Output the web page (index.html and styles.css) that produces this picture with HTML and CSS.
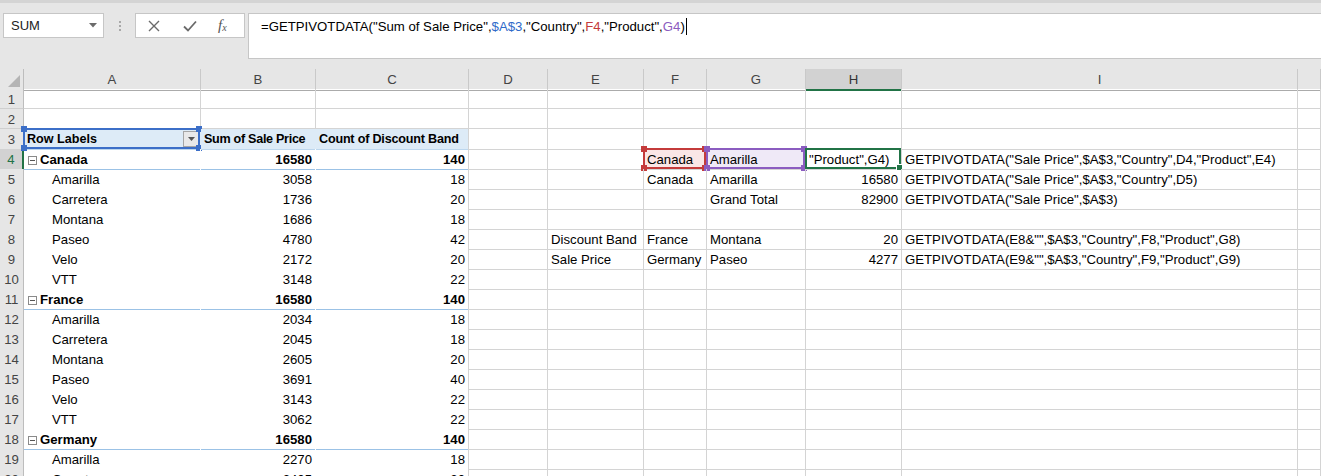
FILE: index.html
```html
<!DOCTYPE html>
<html>
<head>
<meta charset="utf-8">
<link rel="stylesheet" href="styles.css">
</head>
<body>
<div class="app">
  <div class="topstrip"></div>
  <div class="fbar">
    <div class="namebox"><span>SUM</span><svg class="nb-caret" width="8" height="5" viewBox="0 0 8 5"><path d="M0 0H8L4 4.5Z" fill="#6b6b6b"/></svg></div>
    <div class="grip"><i></i><i></i><i></i></div>
    <div class="btns">
      <svg class="ico" width="12" height="12" viewBox="0 0 12 12"><path d="M1 1L11 11M11 1L1 11" stroke="#6a6a6a" stroke-width="1.4" fill="none"/></svg>
      <svg class="ico" width="14" height="12" viewBox="0 0 14 12"><path d="M1 6.5L5 10.5L13 1.5" stroke="#6a6a6a" stroke-width="1.8" fill="none"/></svg>
      <span class="fx">f<sub>x</sub></span>
    </div>
    <div class="formula">=GETPIVOTDATA("Sum of Sale Price",<span class="r-blue">$A$3</span>,"Country",<span class="r-red">F4</span>,"Product",<span class="r-purple">G4</span>)<span class="caret"></span></div>
  </div>

  <div class="sheet">
    <div class="row colhdr">
      <div class="corner"><svg width="12" height="12" viewBox="0 0 12 12"><path d="M12 0V12H0Z" fill="#b4b4b4"/></svg></div>
      <div class="ch">A</div><div class="ch">B</div><div class="ch">C</div><div class="ch">D</div><div class="ch">E</div><div class="ch">F</div><div class="ch">G</div><div class="ch sel">H</div><div class="ch">I</div><div class="ch last"></div>
    </div>

    <div class="row"><div class="rh">1</div><div class="c"></div><div class="c"></div><div class="c"></div><div class="c"></div><div class="c"></div><div class="c"></div><div class="c"></div><div class="c"></div><div class="c"></div><div class="c"></div></div>
    <div class="row"><div class="rh">2</div><div class="c"></div><div class="c"></div><div class="c"></div><div class="c"></div><div class="c"></div><div class="c"></div><div class="c"></div><div class="c"></div><div class="c"></div><div class="c"></div></div>
    <div class="row"><div class="rh">3</div>
      <div class="c ph pa3"><span>Row Labels</span><span class="dd"><svg width="7" height="4" viewBox="0 0 7 4"><path d="M0 0H7L3.5 4Z" fill="#555"/></svg></span><span class="hl hl-blue"><i class="h tl"></i><i class="h tr"></i><i class="h bl"></i><i class="h br"></i></span></div>
      <div class="c ph pm">Sum of Sale Price</div><div class="c ph pc">Count of Discount Band</div>
      <div class="c"></div><div class="c"></div><div class="c"></div><div class="c"></div><div class="c"></div><div class="c"></div><div class="c"></div></div>
    <div class="row"><div class="rh rsel">4</div>
      <div class="c pa g b"><span class="tog"></span>Canada</div><div class="c pm g b n">16580</div><div class="c pc g b n">140</div>
      <div class="c"></div><div class="c"></div>
      <div class="c fill-red">Canada<span class="hl hl-red"><i class="h tl"></i><i class="h tr"></i><i class="h bl"></i><i class="h br"></i></span></div>
      <div class="c fill-purple">Amarilla<span class="hl hl-purple"><i class="h tl"></i><i class="h tr"></i><i class="h bl"></i><i class="h br"></i></span></div>
      <div class="c">"Product",G4)<span class="hl hl-green"><i class="h br"></i></span></div>
      <div class="c">GETPIVOTDATA("Sale Price",$A$3,"Country",D4,"Product",E4)</div><div class="c"></div></div>
    <div class="row"><div class="rh">5</div>
      <div class="c pa in">Amarilla</div><div class="c pm n">3058</div><div class="c pc n">18</div>
      <div class="c"></div><div class="c"></div><div class="c">Canada</div><div class="c">Amarilla</div><div class="c n">16580</div><div class="c">GETPIVOTDATA("Sale Price",$A$3,"Country",D5)</div><div class="c"></div></div>
    <div class="row"><div class="rh">6</div>
      <div class="c pa in">Carretera</div><div class="c pm n">1736</div><div class="c pc n">20</div>
      <div class="c"></div><div class="c"></div><div class="c"></div><div class="c">Grand Total</div><div class="c n">82900</div><div class="c">GETPIVOTDATA("Sale Price",$A$3)</div><div class="c"></div></div>
    <div class="row"><div class="rh">7</div>
      <div class="c pa in">Montana</div><div class="c pm n">1686</div><div class="c pc n">18</div>
      <div class="c"></div><div class="c"></div><div class="c"></div><div class="c"></div><div class="c"></div><div class="c"></div><div class="c"></div></div>
    <div class="row"><div class="rh">8</div>
      <div class="c pa in">Paseo</div><div class="c pm n">4780</div><div class="c pc n">42</div>
      <div class="c"></div><div class="c">Discount Band</div><div class="c">France</div><div class="c">Montana</div><div class="c n">20</div><div class="c">GETPIVOTDATA(E8&amp;"",$A$3,"Country",F8,"Product",G8)</div><div class="c"></div></div>
    <div class="row"><div class="rh">9</div>
      <div class="c pa in">Velo</div><div class="c pm n">2172</div><div class="c pc n">20</div>
      <div class="c"></div><div class="c">Sale Price</div><div class="c">Germany</div><div class="c">Paseo</div><div class="c n">4277</div><div class="c">GETPIVOTDATA(E9&amp;"",$A$3,"Country",F9,"Product",G9)</div><div class="c"></div></div>
    <div class="row"><div class="rh">10</div>
      <div class="c pa in">VTT</div><div class="c pm n">3148</div><div class="c pc n">22</div>
      <div class="c"></div><div class="c"></div><div class="c"></div><div class="c"></div><div class="c"></div><div class="c"></div><div class="c"></div></div>
    <div class="row"><div class="rh">11</div>
      <div class="c pa g b"><span class="tog"></span>France</div><div class="c pm g b n">16580</div><div class="c pc g b n">140</div>
      <div class="c"></div><div class="c"></div><div class="c"></div><div class="c"></div><div class="c"></div><div class="c"></div><div class="c"></div></div>
    <div class="row"><div class="rh">12</div>
      <div class="c pa in">Amarilla</div><div class="c pm n">2034</div><div class="c pc n">18</div>
      <div class="c"></div><div class="c"></div><div class="c"></div><div class="c"></div><div class="c"></div><div class="c"></div><div class="c"></div></div>
    <div class="row"><div class="rh">13</div>
      <div class="c pa in">Carretera</div><div class="c pm n">2045</div><div class="c pc n">18</div>
      <div class="c"></div><div class="c"></div><div class="c"></div><div class="c"></div><div class="c"></div><div class="c"></div><div class="c"></div></div>
    <div class="row"><div class="rh">14</div>
      <div class="c pa in">Montana</div><div class="c pm n">2605</div><div class="c pc n">20</div>
      <div class="c"></div><div class="c"></div><div class="c"></div><div class="c"></div><div class="c"></div><div class="c"></div><div class="c"></div></div>
    <div class="row"><div class="rh">15</div>
      <div class="c pa in">Paseo</div><div class="c pm n">3691</div><div class="c pc n">40</div>
      <div class="c"></div><div class="c"></div><div class="c"></div><div class="c"></div><div class="c"></div><div class="c"></div><div class="c"></div></div>
    <div class="row"><div class="rh">16</div>
      <div class="c pa in">Velo</div><div class="c pm n">3143</div><div class="c pc n">22</div>
      <div class="c"></div><div class="c"></div><div class="c"></div><div class="c"></div><div class="c"></div><div class="c"></div><div class="c"></div></div>
    <div class="row"><div class="rh">17</div>
      <div class="c pa in">VTT</div><div class="c pm n">3062</div><div class="c pc n">22</div>
      <div class="c"></div><div class="c"></div><div class="c"></div><div class="c"></div><div class="c"></div><div class="c"></div><div class="c"></div></div>
    <div class="row"><div class="rh">18</div>
      <div class="c pa g b"><span class="tog"></span>Germany</div><div class="c pm g b n">16580</div><div class="c pc g b n">140</div>
      <div class="c"></div><div class="c"></div><div class="c"></div><div class="c"></div><div class="c"></div><div class="c"></div><div class="c"></div></div>
    <div class="row"><div class="rh">19</div>
      <div class="c pa in">Amarilla</div><div class="c pm n">2270</div><div class="c pc n">18</div>
      <div class="c"></div><div class="c"></div><div class="c"></div><div class="c"></div><div class="c"></div><div class="c"></div><div class="c"></div></div>
    <div class="row"><div class="rh">20</div>
      <div class="c pa in">Carretera</div><div class="c pm n">2405</div><div class="c pc n">20</div>
      <div class="c"></div><div class="c"></div><div class="c"></div><div class="c"></div><div class="c"></div><div class="c"></div><div class="c"></div></div>
  </div>
</div>
</body>
</html>
```

FILE: styles.css
```css
html, body {
  margin: 0;
  padding: 0;
  overflow: hidden;
  background: #ffffff;
}
body {
  font-family: "Liberation Sans", Arial, sans-serif;
  font-size: 13.2px;
  color: #000;
}
.app {
  width: 1321px;
  height: 476px;
  overflow: hidden;
}
.topstrip {
  height: 3px;
  background: #d4d4d4;
}
.fbar {
  height: 66px;
  box-sizing: border-box;
  background: #e6e6e6;
  padding: 10px 0 0 3px;
  display: flex;
  align-items: flex-start;
}
.namebox {
  width: 101px;
  height: 25px;
  box-sizing: border-box;
  background: #fff;
  border: 1px solid #c6c6c6;
  display: flex;
  align-items: center;
  justify-content: space-between;
  padding: 0 6px 0 7px;
  color: #222;
  font-size: 13px;
}
.grip {
  width: 31px;
  height: 25px;
  display: flex;
  flex-direction: column;
  align-items: center;
  justify-content: center;
  gap: 2px;
}
.grip i {
  display: block;
  width: 2px;
  height: 2px;
  background: #a8a8a8;
}
.btns {
  width: 110px;
  height: 25px;
  box-sizing: border-box;
  background: #fff;
  border: 1px solid #c6c6c6;
  display: flex;
  align-items: center;
  padding-left: 12px;
}
.btns .ico:first-child { margin-right: 23px; }
.btns .ico:nth-child(2) { margin-right: 21px; }
.fx {
  font-family: "Liberation Serif", "Times New Roman", serif;
  font-style: italic;
  font-size: 15px;
  color: #555;
  line-height: 1;
}
.fx sub {
  font-size: 10px;
  vertical-align: -1px;
}
.formula {
  margin-left: 3px;
  flex: 1;
  height: 46px;
  box-sizing: border-box;
  background: #fff;
  border: 1px solid #c6c6c6;
  border-right: none;
  padding: 4px 0 0 12px;
  line-height: 18px;
  color: #000;
  white-space: nowrap;
}
.r-blue { color: #2f6ac9; }
.r-red { color: #c43b3b; }
.r-purple { color: #8b5cc0; }
.caret {
  display: inline-block;
  width: 1px;
  height: 17px;
  background: #000;
  vertical-align: -4px;
  margin-left: 1px;
}

/* sheet */
.row {
  display: grid;
  grid-template-columns: 24px 177px 115px 153px 79px 96px 63px 99px 96px 396px 1fr;
  height: 20px;
}
.colhdr {
  background: #e6e6e6;
}
.corner {
  box-sizing: border-box;
  border-right: 1px solid #bdbdbd;
  border-bottom: 1px solid #ababab;
  display: flex;
  align-items: flex-end;
  justify-content: flex-end;
  padding: 0 3px 3px 0;
}
.ch {
  box-sizing: border-box;
  border-right: 1px solid #c9c9c9;
  border-bottom: 1px solid #ababab;
  text-align: center;
  line-height: 19px;
  padding-top: 1px;
  color: #444;
}
.ch.sel {
  background: #d2d2d2;
  border-bottom: 2px solid #217346;
  color: #333;
}
.rh {
  box-sizing: border-box;
  background: #e6e6e6;
  border-right: 1px solid #bdbdbd;
  border-bottom: 1px solid #cfcfcf;
  text-align: center;
  line-height: 19px;
  padding-top: 1px;
  color: #444;
  overflow: hidden;
}
.rh.rsel {
  background: #d2d2d2;
  border-right: 2px solid #217346;
  color: #217346;
}
.c {
  position: relative;
  box-sizing: border-box;
  border-right: 1px solid #d4d4d4;
  border-bottom: 1px solid #d4d4d4;
  padding: 1px 3px 0;
  line-height: 19px;
  white-space: nowrap;
}
.n { text-align: right; }
.b { font-weight: bold; }

/* pivot */
.pa, .pm { border-right-color: #fff; border-bottom-color: #fff; }
.pc { border-bottom-color: #fff; }
.ph {
  background: #ddebf7;
  font-weight: bold;
  font-size: 12.6px;
  border-bottom-color: #bdd7ee;
}
.ph.pa3 {
  display: flex;
  align-items: center;
  justify-content: space-between;
  padding: 0 1px 0 3px;
  border-right-color: #ddebf7;
}
.ph.pm { border-right-color: #ddebf7; letter-spacing: -0.3px; }
.ph.pc { letter-spacing: -0.2px; }
.pa.g, .pm.g, .pc.g { border-bottom-color: #9bc2e6; }
.in { padding-left: 28px; }
.tog {
  display: inline-block;
  width: 9px;
  height: 9px;
  box-sizing: border-box;
  border: 1px solid #8a8a8a;
  background: linear-gradient(#555, #555) center / 5px 1px no-repeat;
  margin: 0 3px 0 1px;
  vertical-align: -1px;
}
.dd {
  width: 16px;
  height: 16px;
  box-sizing: border-box;
  border: 1px solid #a6a6a6;
  background: #e9e9e9;
  display: flex;
  align-items: center;
  justify-content: center;
}

/* reference highlights */
.fill-red { background: #fae6e6; }
.fill-purple { background: #efe9f7; }
.hl {
  position: absolute;
  left: -1px;
  top: -1px;
  right: 0;
  bottom: 0;
  border: 2px solid;
  pointer-events: none;
}
.hl-blue { border-color: #3c6fc8; color: #3c6fc8; }
.hl-red { border-color: #c43b3b; color: #c43b3b; }
.hl-purple { border-color: #8b5cc0; color: #8b5cc0; }
.hl-green { border-color: #217346; color: #217346; }
.h {
  position: absolute;
  width: 6px;
  height: 6px;
  background: currentColor;
}
.h.tl { left: -4px; top: -4px; }
.h.tr { right: -4px; top: -4px; }
.h.bl { left: -4px; bottom: -4px; }
.h.br { right: -4px; bottom: -4px; }
.hl-green .h.br {
  width: 5px;
  height: 5px;
  right: -4px;
  bottom: -4px;
  border: 1px solid #fff;
}
```
